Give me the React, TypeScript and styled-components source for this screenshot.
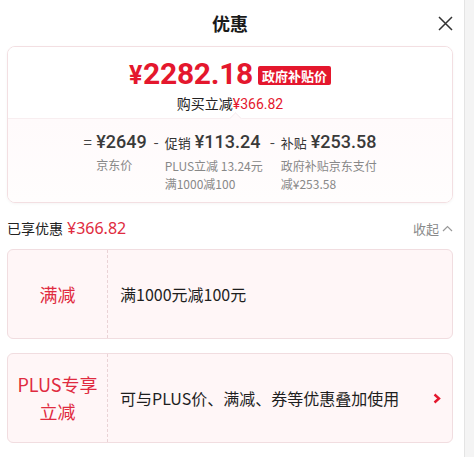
import React from "react";
import styled, { createGlobalStyle } from "styled-components";

const GlobalStyle = createGlobalStyle`
  html, body { margin: 0; padding: 0; }
  body {
    background: #f4f4f4;
    font-family: "Noto Sans CJK SC", "Noto Sans", sans-serif;
    color: #333;
  }
  * { box-sizing: border-box; }
`;

const RED = "#e4172d";
const SOFT_RED = "#e02b40";

const Panel = styled.div`
  width: 465px;
  height: 457px;
  background: #fff;
  border-right: 1px solid #e4e4e4;
  padding: 0 11px 0 7px;
  display: flex;
  flex-direction: column;
`;

const Header = styled.div`
  height: 46px;
  display: grid;
  grid-template-columns: 1fr auto 1fr;
  align-items: center;
`;

const Title = styled.div`
  grid-column: 2;
  font-size: 18px;
  font-weight: 700;
  color: #1a1a1a;
  line-height: 24px;
`;

const CloseBtn = styled.div`
  grid-column: 3;
  justify-self: end;
  width: 16px;
  height: 16px;
  display: flex;
  align-items: center;
  justify-content: center;
`;

const PriceCard = styled.div`
  border: 1px solid #f3dfe2;
  border-radius: 8px;
  overflow: hidden;
  box-shadow: 0 1px 3px rgba(0, 0, 0, 0.04);
`;

const PriceTop = styled.div`
  background: #fff;
  padding: 8px 0 6px;
  display: flex;
  flex-direction: column;
  align-items: center;
`;

const PriceLine = styled.div`
  height: 40px;
  display: flex;
  align-items: center;
  gap: 5px;
`;

const BigPrice = styled.span`
  font-family: Roboto, "Noto Sans", sans-serif;
  font-weight: 700;
  color: ${RED};
  font-size: 30px;
  line-height: 40px;
  letter-spacing: -0.3px;
`;

const Yen = styled.span`
  font-size: 25px;
  margin-right: 1px;
`;

const Badge = styled.span`
  background: ${RED};
  color: #fff;
  font-weight: 700;
  font-size: 13px;
  line-height: 19px;
  padding: 0 4px;
  border-radius: 2px;
  margin-top: 1px;
`;

const SubLine = styled.div`
  font-size: 14px;
  line-height: 16px;
  color: #222;
`;

const RedText = styled.span`
  color: ${RED};
  font-family: Roboto, "Noto Sans", "Noto Sans CJK SC", sans-serif;
`;

const PriceBottom = styled.div`
  position: relative;
  border-top: 1px solid #f8eef0;
  background: linear-gradient(180deg, #fffafb 0%, #fffdfd 100%);
  padding: 11px 0 9px;
  display: flex;
  justify-content: center;
  gap: 5px;
  &::before {
    content: "";
    position: absolute;
    top: -5px;
    left: 223px;
    width: 8px;
    height: 8px;
    background: #fffafb;
    border-left: 1px solid #f8eef0;
    border-top: 1px solid #f8eef0;
    transform: rotate(45deg);
  }
`;

const Col = styled.div`
  display: flex;
  align-items: flex-start;
`;

const Op = styled.span`
  width: 9px;
  margin-right: 4px;
  font-size: 15px;
  line-height: 24px;
  color: #444;
  text-align: center;
`;

const ColBody = styled.div`
  display: flex;
  flex-direction: column;
`;

const ColTop = styled.div`
  line-height: 24px;
  white-space: nowrap;
  display: flex;
  align-items: baseline;
  gap: 4px;
`;

const ColTag = styled.span`
  font-size: 13px;
  color: #333;
`;

const ColPrice = styled.span`
  font-family: Roboto, "Noto Sans", sans-serif;
  font-weight: 500;
  font-size: 18px;
  color: #3a3a3a;
`;

const ColLabel = styled.div`
  margin-top: 2px;
  font-size: 12px;
  line-height: 18px;
  color: #888;
  white-space: nowrap;
`;

const SavedRow = styled.div`
  margin-top: 15px;
  height: 20px;
  display: flex;
  align-items: center;
  justify-content: space-between;
`;

const SavedLabel = styled.div`
  font-size: 14px;
  color: #222;
  display: flex;
  align-items: center;
  gap: 4px;
`;

const SavedAmount = styled.span`
  color: ${SOFT_RED};
  font-family: "Noto Sans", "Noto Sans CJK SC", sans-serif;
  font-size: 16px;
`;

const Collapse = styled.div`
  font-size: 13px;
  color: #8a8a8a;
  display: flex;
  align-items: center;
  gap: 3px;
`;

const PromoCard = styled.div<{ $gap: number }>`
  margin-top: ${(p) => p.$gap}px;
  height: 90px;
  border: 1px solid #f1dde0;
  border-radius: 6px;
  background: #fff6f7;
  display: flex;
`;

const PromoTag = styled.div`
  width: 100px;
  flex-shrink: 0;
  border-right: 1px dashed #ead3d6;
  display: flex;
  align-items: center;
  justify-content: center;
  text-align: center;
  color: ${SOFT_RED};
  font-size: 18px;
  line-height: 27px;
`;

const PromoBody = styled.div`
  flex: 1;
  display: flex;
  align-items: center;
  justify-content: space-between;
  padding: 0 11px 0 12px;
  font-size: 16px;
  color: #1e1e1e;
`;

const Arrow = styled.svg`
  display: block;
`;

export default function App() {
  return (
    <>
      <GlobalStyle />
      <Panel>
        <Header>
          <Title>优惠</Title>
          <CloseBtn>
            <svg width="15" height="15" viewBox="0 0 15 15">
              <path d="M1 1 L14 14 M14 1 L1 14" stroke="#333" strokeWidth="1.5" fill="none" />
            </svg>
          </CloseBtn>
        </Header>

        <PriceCard>
          <PriceTop>
            <PriceLine>
              <BigPrice>
                <Yen>¥</Yen>2282.18
              </BigPrice>
              <Badge>政府补贴价</Badge>
            </PriceLine>
            <SubLine>
              购买立减<RedText>¥366.82</RedText>
            </SubLine>
          </PriceTop>
          <PriceBottom>
            <Col>
              <Op>=</Op>
              <ColBody>
                <ColTop>
                  <ColPrice>¥2649</ColPrice>
                </ColTop>
                <ColLabel>京东价</ColLabel>
              </ColBody>
            </Col>
            <Col>
              <Op>-</Op>
              <ColBody>
                <ColTop>
                  <ColTag>促销</ColTag>
                  <ColPrice>¥113.24</ColPrice>
                </ColTop>
                <ColLabel>
                  PLUS立减 13.24元
                  <br />
                  满1000减100
                </ColLabel>
              </ColBody>
            </Col>
            <Col>
              <Op>-</Op>
              <ColBody>
                <ColTop>
                  <ColTag>补贴</ColTag>
                  <ColPrice>¥253.58</ColPrice>
                </ColTop>
                <ColLabel>
                  政府补贴京东支付
                  <br />
                  减¥253.58
                </ColLabel>
              </ColBody>
            </Col>
          </PriceBottom>
        </PriceCard>

        <SavedRow>
          <SavedLabel>
            已享优惠<SavedAmount>¥366.82</SavedAmount>
          </SavedLabel>
          <Collapse>
            收起
            <Arrow width="11" height="7" viewBox="0 0 11 7">
              <path d="M1 6 L5.5 1.5 L10 6" stroke="#999" strokeWidth="1.2" fill="none" />
            </Arrow>
          </Collapse>
        </SavedRow>

        <PromoCard $gap={11}>
          <PromoTag>满减</PromoTag>
          <PromoBody>满1000元减100元</PromoBody>
        </PromoCard>

        <PromoCard $gap={14}>
          <PromoTag>
            PLUS专享
            <br />
            立减
          </PromoTag>
          <PromoBody>
            可与PLUS价、满减、券等优惠叠加使用
            <Arrow width="8" height="11" viewBox="0 0 8 11">
              <path d="M1.5 1.5 L6 5.5 L1.5 9.5" stroke={RED} strokeWidth="2.4" fill="none" />
            </Arrow>
          </PromoBody>
        </PromoCard>
      </Panel>
    </>
  );
}
